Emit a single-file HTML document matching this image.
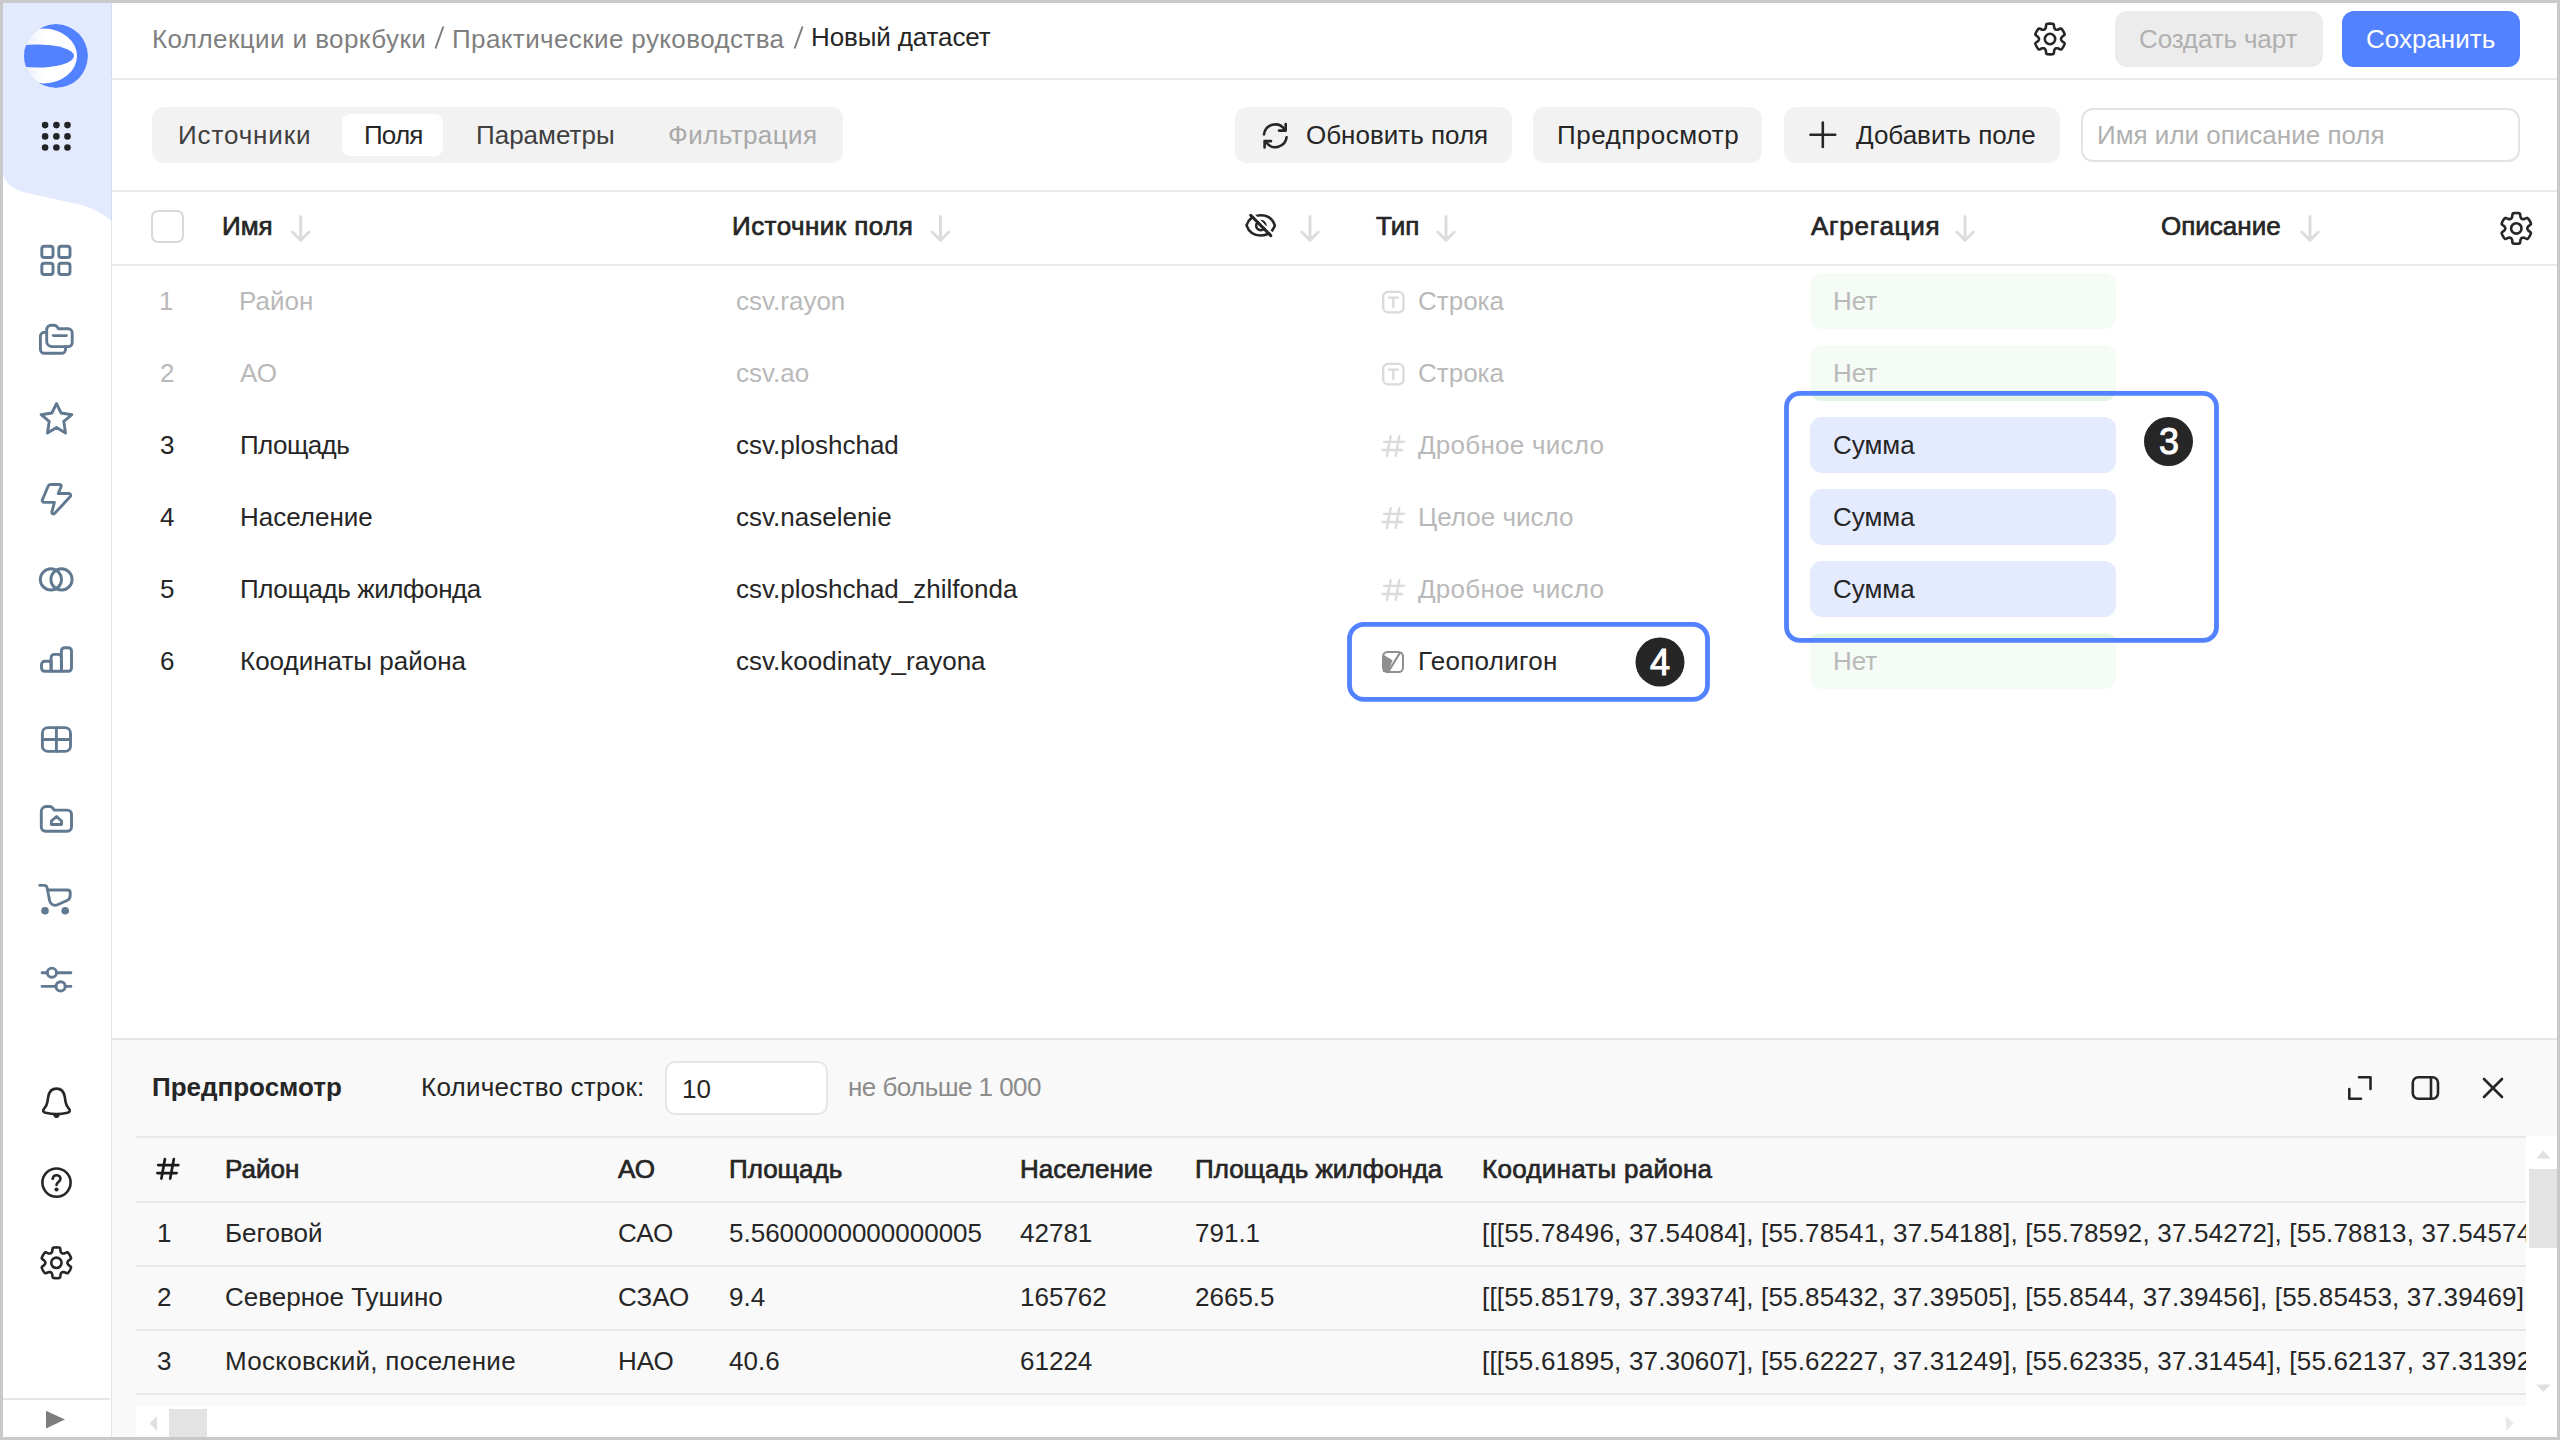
<!DOCTYPE html>
<html><head><meta charset="utf-8">
<style>
*{box-sizing:border-box;margin:0;padding:0}
html,body{width:2560px;height:1440px;overflow:hidden;background:#fff;font-family:"Liberation Sans",sans-serif;color:#262626}
.a{position:absolute}
.t{position:absolute;white-space:pre;font-size:26px;line-height:26px}
.b{font-weight:700}
.hd{font-weight:400 !important;-webkit-text-stroke:0.7px #262626}
.g{color:#b9b9b9}
.m{color:#7f7f7f}
.hl{position:absolute;height:2px;background:#e9e9e9}
svg{position:absolute;overflow:visible}
.frame{position:absolute;left:0;top:0;width:2560px;height:1440px;border:3px solid #c9c9c9;pointer-events:none;z-index:100}
.si{stroke:#617990;stroke-width:2.9;fill:none;stroke-linecap:round;stroke-linejoin:round}
.sk{stroke:#262626;stroke-width:2.6;fill:none;stroke-linecap:round;stroke-linejoin:round}
.btn{position:absolute;background:#f2f2f2;border-radius:12px}
.pill{position:absolute;left:1810px;width:306px;height:56px;border-radius:12px}
.arr{stroke:#dddddd;stroke-width:3;fill:none;stroke-linecap:round;stroke-linejoin:round}
</style></head><body>

<!-- ============ SIDEBAR ============ -->
<div class="a" style="left:111px;top:0;width:1px;height:1440px;background:#e3e3e3"></div>
<svg width="111" height="230" style="left:0;top:0">
  <path d="M0 0 H111 V220 C101 213 94 209 82 205 L27 193 C13 190 5 183 3 174 L3 0 Z" fill="#e4eafd"/>
  <rect x="111" y="0" width="1" height="221" fill="#d3dbf2"/>
</svg>
<!-- logo -->
<svg width="64" height="64" style="left:24px;top:24px" viewBox="0 0 64 64">
  <defs>
    <clipPath id="lc"><circle cx="32" cy="32" r="32"/></clipPath>
    <linearGradient id="lg" x1="0" x2="1" y1="0" y2="0">
      <stop offset="0" stop-color="#dde5fd"/><stop offset="0.5" stop-color="#ffffff"/><stop offset="1" stop-color="#ffffff"/>
    </linearGradient>
  </defs>
  <g clip-path="url(#lc)">
    <circle cx="32" cy="32" r="32" fill="#5282ff"/>
    <ellipse cx="20" cy="32" rx="33" ry="27.4" fill="url(#lg)"/>
    <ellipse cx="13" cy="32" rx="37" ry="11.6" fill="#5282ff"/>
  </g>
</svg>
<!-- apps dots -->
<svg width="111" height="40" style="left:0;top:110px" viewBox="0 110 111 40">
  <g fill="#222326">
    <circle cx="45.1" cy="125.1" r="3.3"/><circle cx="56.4" cy="125.1" r="3.3"/><circle cx="67.5" cy="125.1" r="3.3"/>
    <circle cx="45.1" cy="136.4" r="3.3"/><circle cx="56.4" cy="136.4" r="3.3"/><circle cx="67.5" cy="136.4" r="3.3"/>
    <circle cx="45.1" cy="147.5" r="3.3"/><circle cx="56.4" cy="147.5" r="3.3"/><circle cx="67.5" cy="147.5" r="3.3"/>
  </g>
</svg>
<!-- nav icons -->
<svg width="111" height="1440" style="left:0;top:0">
  <g class="si">
    <!-- grid 4 -->
    <rect x="41.8" y="246.3" width="11.2" height="11.2" rx="2.6"/>
    <rect x="58.8" y="246.3" width="11.2" height="11.2" rx="2.6"/>
    <rect x="41.8" y="263.3" width="11.2" height="11.2" rx="2.6"/>
    <rect x="58.8" y="263.3" width="11.2" height="11.2" rx="2.6"/>
    <!-- collections -->
    <path d="M46.7 332.3 H44.4 C42.2 332.3 40.4 334.1 40.4 336.3 V349.3 C40.4 351.5 42.2 353.3 44.4 353.3 H61.5 C63.7 353.3 65.6 351.5 65.6 349.3 V346.6"/>
    <path d="M46.7 330 C46.7 327.3 48.7 325.2 51.3 325.2 H53.8 C55.3 325.2 56.5 325.9 57.4 327.1 L58.6 328.8 H68.2 C70.4 328.8 72.2 330.6 72.2 332.8 V342.6 C72.2 344.8 70.4 346.6 68.2 346.6 H52 C49.1 346.6 46.7 344.2 46.7 341.3 Z"/>
    <path d="M53.3 335.6 H66.4"/>
    <!-- star -->
    <path d="M56.5 403.6 L61.1 413 L71.9 414.7 L63.8 421.4 L65.5 433 L56.5 427.5 L47.5 433 L49.2 421.4 L41.1 414.7 L51.9 413 Z"/>
    <!-- lightning -->
    <path d="M50.6 484.5 H59.5 C60.7 484.5 61.5 485.6 61.1 486.7 L58.2 493.5 H68.8 C70.5 493.5 71.3 495.5 70.1 496.7 L54.8 513.3 C53.6 514.6 51.5 513.5 51.9 511.8 L54.4 502.4 H44.2 C42.8 502.4 41.9 501.1 42.4 499.8 L48.1 486.2 C48.5 485.2 49.5 484.5 50.6 484.5 Z"/>
    <!-- circles -->
    <circle cx="50.9" cy="579.4" r="10.6"/>
    <circle cx="61.5" cy="579.4" r="10.6"/>
    <!-- bars -->
    <path d="M41.5 664.5 C41.5 662.7 42.9 661.3 44.7 661.3 H51.1 V671.3 H44.7 C42.9 671.3 41.5 669.9 41.5 668.1 Z"/>
    <path d="M51.1 671.3 V657.6 C51.1 655.8 52.5 654.4 54.3 654.4 H58.2 C60 654.4 61.4 655.8 61.4 657.6 V671.3 Z"/>
    <path d="M61.4 671.3 V650.9 C61.4 649.1 62.8 647.7 64.6 647.7 H68.3 C70.1 647.7 71.5 649.1 71.5 650.9 V668.1 C71.5 669.9 70.1 671.3 68.3 671.3 Z"/>
    <!-- table grid -->
    <rect x="42.4" y="727.6" width="28.1" height="23.8" rx="5.5"/>
    <path d="M56.4 727.6 V751.4 M42.4 739.5 H70.5"/>
    <!-- folder home -->
    <path d="M41.3 811.5 C41.3 808.7 43.5 806.5 46.3 806.5 H49.5 C50.8 806.5 52 807.1 52.8 808.1 L54.2 810.1 H67.3 C69.6 810.1 71.5 812 71.5 814.3 V827.1 C71.5 829.4 69.6 831.3 67.3 831.3 H45.5 C43.2 831.3 41.3 829.4 41.3 827.1 Z"/>
    <path d="M51.4 824.5 V821 L56.5 816.5 L61.5 821 V824.5 Z"/>
    <!-- cart -->
    <path d="M39.8 885.4 H44.3 C45.6 885.4 46.7 886.3 47 887.5 L47.5 890 H67.5 C69 890 70.2 891.2 70.2 892.7 V895.5 C70.2 897.7 69 899.6 67 900.5 L57.5 904.8 C54.3 906.3 50.6 904.5 49.7 901 L47.5 890"/>
  </g>
  <g fill="#617990">
    <circle cx="45" cy="910.8" r="3.8"/><circle cx="65.2" cy="910.8" r="3.8"/>
  </g>
  <g class="si">
    <!-- sliders -->
    <path d="M42.1 972.7 H47.3 M56.5 972.7 H70.9 M42.1 986.4 H56 M65.2 986.4 H70.9"/>
    <circle cx="51.9" cy="972.7" r="4.6"/>
    <circle cx="60.6" cy="986.4" r="4.6"/>
  </g>
  <g class="sk" stroke-width="2.9">
    <!-- bell -->
    <path d="M56.5 1088.6 C51.7 1088.6 49 1092 48.2 1097 L47.4 1102 C46.9 1105.3 45.5 1107.2 44 1108.8 C42.5 1110.5 43.2 1112.3 45.5 1112.8 C49.2 1113.6 52.8 1114 56.5 1114 C60.2 1114 63.8 1113.6 67.5 1112.8 C69.8 1112.3 70.5 1110.5 69 1108.8 C67.5 1107.2 66.1 1105.3 65.6 1102 L64.8 1097 C64 1092 61.3 1088.6 56.5 1088.6 Z"/>
    <!-- help -->
    <circle cx="56.5" cy="1182.6" r="14.1"/>
    <path d="M52.7 1178.8 C52.9 1176.6 54.5 1175.3 56.6 1175.3 C58.8 1175.3 60.5 1176.8 60.5 1178.8 C60.5 1181.8 56.5 1182.3 56.5 1185"/>
  </g>
  <g fill="#262626">
    <path d="M52.6 1113.4 H60.4 L59.3 1116.2 C58.8 1117.4 57.7 1118 56.5 1118 C55.3 1118 54.2 1117.4 53.7 1116.2 Z"/>
    <circle cx="56.5" cy="1189.5" r="2.1"/>
  </g>
  <!-- sidebar gear -->
  <g transform="translate(56.4 1262.8)" class="sk" stroke-width="2.9">
    <path id="gearp" d="M11.00 0.00 L11.04 0.39 L11.17 0.78 L11.39 1.20 L11.68 1.64 L11.97 2.11 L12.79 2.72 L13.80 3.44 L14.55 4.17 L14.65 4.76 L14.47 5.27 L14.28 5.77 L14.07 6.26 L13.84 6.75 L13.60 7.23 L13.34 7.70 L13.06 8.16 L12.77 8.61 L12.46 9.05 L12.14 9.48 L11.80 9.90 L11.44 10.30 L10.89 10.52 L9.88 10.23 L8.75 9.72 L7.82 9.31 L7.26 9.30 L6.73 9.26 L6.26 9.28 L5.86 9.37 L5.50 9.53 L5.19 9.76 L4.91 10.07 L4.66 10.46 L4.42 10.94 L4.16 11.43 L4.04 12.44 L3.92 13.67 L3.66 14.69 L3.20 15.06 L2.67 15.17 L2.14 15.25 L1.61 15.32 L1.07 15.36 L0.54 15.39 L0.00 15.40 L-0.54 15.39 L-1.07 15.36 L-1.61 15.32 L-2.14 15.25 L-2.67 15.17 L-3.20 15.06 L-3.66 14.69 L-3.92 13.67 L-4.04 12.44 L-4.16 11.43 L-4.42 10.94 L-4.66 10.46 L-4.91 10.07 L-5.19 9.76 L-5.50 9.53 L-5.86 9.37 L-6.26 9.28 L-6.73 9.26 L-7.26 9.30 L-7.82 9.31 L-8.75 9.72 L-9.88 10.23 L-10.89 10.52 L-11.44 10.30 L-11.80 9.90 L-12.14 9.48 L-12.46 9.05 L-12.77 8.61 L-13.06 8.16 L-13.34 7.70 L-13.60 7.23 L-13.84 6.75 L-14.07 6.26 L-14.28 5.77 L-14.47 5.27 L-14.65 4.76 L-14.55 4.17 L-13.80 3.44 L-12.79 2.72 L-11.97 2.11 L-11.68 1.64 L-11.39 1.20 L-11.17 0.78 L-11.04 0.39 L-11.00 0.00 L-11.04 -0.39 L-11.17 -0.78 L-11.39 -1.20 L-11.68 -1.64 L-11.97 -2.11 L-12.79 -2.72 L-13.80 -3.44 L-14.55 -4.17 L-14.65 -4.76 L-14.47 -5.27 L-14.28 -5.77 L-14.07 -6.26 L-13.84 -6.75 L-13.60 -7.23 L-13.34 -7.70 L-13.06 -8.16 L-12.77 -8.61 L-12.46 -9.05 L-12.14 -9.48 L-11.80 -9.90 L-11.44 -10.30 L-10.89 -10.52 L-9.88 -10.23 L-8.75 -9.72 L-7.82 -9.31 L-7.26 -9.30 L-6.73 -9.26 L-6.26 -9.28 L-5.86 -9.37 L-5.50 -9.53 L-5.19 -9.76 L-4.91 -10.07 L-4.66 -10.46 L-4.42 -10.94 L-4.16 -11.43 L-4.04 -12.44 L-3.92 -13.67 L-3.66 -14.69 L-3.20 -15.06 L-2.67 -15.17 L-2.14 -15.25 L-1.61 -15.32 L-1.07 -15.36 L-0.54 -15.39 L-0.00 -15.40 L0.54 -15.39 L1.07 -15.36 L1.61 -15.32 L2.14 -15.25 L2.67 -15.17 L3.20 -15.06 L3.66 -14.69 L3.92 -13.67 L4.04 -12.44 L4.16 -11.43 L4.42 -10.94 L4.66 -10.46 L4.91 -10.07 L5.19 -9.76 L5.50 -9.53 L5.86 -9.37 L6.26 -9.28 L6.73 -9.26 L7.26 -9.30 L7.82 -9.31 L8.75 -9.72 L9.88 -10.23 L10.89 -10.52 L11.44 -10.30 L11.80 -9.90 L12.14 -9.48 L12.46 -9.05 L12.77 -8.61 L13.06 -8.16 L13.34 -7.70 L13.60 -7.23 L13.84 -6.75 L14.07 -6.26 L14.28 -5.77 L14.47 -5.27 L14.65 -4.76 L14.55 -4.17 L13.80 -3.44 L12.79 -2.72 L11.97 -2.11 L11.68 -1.64 L11.39 -1.20 L11.17 -0.78 L11.04 -0.39 Z"/>
    <circle r="5.2"/>
  </g>
  <rect x="3" y="1398" width="107" height="2" fill="#e6e6e6"/>
  <path d="M46 1410.8 L65 1419.6 L46 1428.4 Z" fill="#7d7d7d"/>
</svg>

<!-- ============ HEADER ============ -->
<div class="hl" style="left:111px;top:78px;width:2449px"></div>
<div class="t m" style="left:152px;top:26px;letter-spacing:0.42px">Коллекции и воркбуки</div>
<svg width="1000" height="60" style="left:0;top:0"><path d="M443.4 26.5 L435.4 48.5 M802.6 26.5 L794.6 48.5" stroke="#7f7f7f" stroke-width="2" fill="none"/></svg>
<div class="t m" style="left:452px;top:26px;letter-spacing:0.39px">Практические руководства</div>
<div class="t" style="left:811px;top:24px;letter-spacing:-0.12px">Новый датасет</div>

<svg width="40" height="40" style="left:2030px;top:19px">
  <g transform="translate(20 20)" class="sk" stroke-width="3"><use href="#gearp"/><circle r="5.2"/></g>
</svg>
<div class="btn" style="left:2115px;top:11px;width:208px;height:56px;background:#ececec"></div>
<div class="t" style="left:2139px;top:26px;color:#b0b0b0;letter-spacing:-0.14px">Создать чарт</div>
<div class="btn" style="left:2342px;top:11px;width:178px;height:56px;background:#5282ff"></div>
<div class="t" style="left:2366px;top:26px;color:#fff">Сохранить</div>


<!-- ============ TOOLBAR ============ -->
<div class="btn" style="left:152px;top:107px;width:691px;height:56px;background:#f2f2f2"></div>
<div class="a" style="left:342px;top:114px;width:101px;height:42px;background:#fff;border-radius:8px"></div>
<div class="t" style="left:178px;top:122px;color:#404040;letter-spacing:0.87px">Источники</div>
<div class="t" style="left:364px;top:122px;letter-spacing:-0.85px">Поля</div>
<div class="t" style="left:476px;top:122px;color:#404040">Параметры</div>
<div class="t" style="left:668px;top:122px;color:#a9a9a9;letter-spacing:0.42px">Фильтрация</div>

<div class="btn" style="left:1235px;top:107px;width:277px;height:56px"></div>
<svg width="2560" height="200" style="left:0;top:0">
  <g class="sk" stroke-width="2.9">
    <path d="M1264 134.4 A11.3 11.3 0 0 1 1284.3 129"/>
    <path d="M1285.7 124 V130.6 H1279"/>
    <path d="M1286.6 137.2 A11.3 11.3 0 0 1 1266.3 142.6"/>
    <path d="M1264.6 147.5 V141.1 H1271"/>
  </g>
</svg>
<div class="t" style="left:1306px;top:122px">Обновить поля</div>
<div class="btn" style="left:1533px;top:107px;width:229px;height:56px"></div>
<div class="t" style="left:1557px;top:122px;letter-spacing:0.49px">Предпросмотр</div>
<div class="btn" style="left:1784px;top:107px;width:276px;height:56px"></div>

<svg width="2560" height="200" style="left:0;top:0"><path class="sk" stroke-width="3.2" d="M1822.8 122.6 V147 M1810.5 134.7 H1835.2"/></svg>
<div class="t" style="left:1856px;top:122px">Добавить поле</div>
<div class="a" style="left:2081px;top:108px;width:439px;height:54px;border:2px solid #e3e3e3;border-radius:12px"></div>
<div class="t" style="left:2097px;top:122px;color:#b0b0b0">Имя или описание поля</div>

<div class="hl" style="left:112px;top:190px;width:2448px"></div>

<!-- ============ TABLE HEADER ============ -->
<div class="a" style="left:151px;top:210px;width:33px;height:33px;border:2px solid #d9d9d9;border-radius:7px"></div>
<div class="t b hd" style="left:222px;top:213px">Имя</div>
<div class="t b hd" style="left:732px;top:213px;letter-spacing:0.45px">Источник поля</div>
<div class="t b hd" style="left:1376px;top:213px">Тип</div>
<div class="t b hd" style="left:1811px;top:213px;letter-spacing:0.75px">Агрегация</div>
<div class="t b hd" style="left:2161px;top:213px">Описание</div>
<svg width="2560" height="300" style="left:0;top:0">
  <g class="arr">
    <path d="M300.7 216.5 V240 M292.4 232 L300.7 240.3 L309.0 232"/>
    <path d="M940.5 216.5 V240 M932.2 232 L940.5 240.3 L948.8 232"/>
    <path d="M1310 216.5 V240 M1301.7 232 L1310 240.3 L1318.3 232"/>
    <path d="M1446 216.5 V240 M1437.7 232 L1446 240.3 L1454.3 232"/>
    <path d="M1965 216.5 V240 M1956.7 232 L1965 240.3 L1973.3 232"/>
    <path d="M2310 216.5 V240 M2301.7 232 L2310 240.3 L2318.3 232"/>
  </g>
  <!-- eye crossed -->
  <g class="sk" stroke-width="2.8">
    <path d="M1246.5 225.4 C1248.8 218.8 1254.2 215.3 1260.7 215.3 C1267.2 215.3 1272.6 218.8 1274.9 225.4 C1272.6 232 1267.2 235.5 1260.7 235.5 C1254.2 235.5 1248.8 232 1246.5 225.4 Z"/>
    <circle cx="1260.8" cy="225.6" r="4.6"/>
  </g>
  <path d="M1250.2 211.2 L1276.2 237.5" stroke="#fff" stroke-width="2.2" fill="none"/>
  <path d="M1250.7 215.3 L1270.8 235.6" stroke="#262626" stroke-width="3" stroke-linecap="round" fill="none"/>
  <g transform="translate(2516.3 228.4)" class="sk" stroke-width="3"><use href="#gearp"/><circle r="5.2"/></g>
</svg>
<div class="hl" style="left:112px;top:264px;width:2448px"></div>

<!-- ============ ROWS ============ -->
<div class="pill" style="top:273px;background:#f5fbf5"></div>
<div class="pill" style="top:345px;background:#f5fbf5"></div>
<div class="pill" style="top:633px;background:#f5fbf5"></div>
<div class="a" style="left:1810px;top:390px;width:306px;height:11px;background:#e3f6e1;border-radius:0 0 12px 12px"></div>
<div class="a" style="left:1810px;top:634px;width:306px;height:8px;background:#e3f6e1;border-radius:12px 12px 0 0"></div>
<div class="pill" style="top:417px;background:#e5ebfe"></div>
<div class="pill" style="top:489px;background:#e5ebfe"></div>
<div class="pill" style="top:561px;background:#e5ebfe"></div>

<div class="t g" style="left:159px;top:288px">1</div>
<div class="t g" style="left:239px;top:288px">Район</div>
<div class="t g" style="left:736px;top:288px">csv.rayon</div>
<div class="t g" style="left:1418px;top:288px">Строка</div>
<div class="t g" style="left:1833px;top:288px">Нет</div>

<div class="t g" style="left:160px;top:360px">2</div>
<div class="t g" style="left:240px;top:360px">АО</div>
<div class="t g" style="left:736px;top:360px">csv.ao</div>
<div class="t g" style="left:1418px;top:360px">Строка</div>
<div class="t g" style="left:1833px;top:360px">Нет</div>

<div class="t" style="left:160px;top:432px">3</div>
<div class="t" style="left:240px;top:432px;letter-spacing:-0.57px">Площадь</div>
<div class="t" style="left:736px;top:432px">csv.ploshchad</div>
<div class="t g" style="left:1418px;top:432px;letter-spacing:0.25px">Дробное число</div>
<div class="t" style="left:1833px;top:432px">Сумма</div>

<div class="t" style="left:160px;top:504px">4</div>
<div class="t" style="left:240px;top:504px">Население</div>
<div class="t" style="left:736px;top:504px">csv.naselenie</div>
<div class="t g" style="left:1418px;top:504px">Целое число</div>
<div class="t" style="left:1833px;top:504px">Сумма</div>

<div class="t" style="left:160px;top:576px">5</div>
<div class="t" style="left:240px;top:576px;letter-spacing:-0.4px">Площадь жилфонда</div>
<div class="t" style="left:736px;top:576px">csv.ploshchad_zhilfonda</div>
<div class="t g" style="left:1418px;top:576px;letter-spacing:0.25px">Дробное число</div>
<div class="t" style="left:1833px;top:576px">Сумма</div>

<div class="t" style="left:160px;top:648px">6</div>
<div class="t" style="left:240px;top:648px">Коодинаты района</div>
<div class="t" style="left:736px;top:648px">csv.koodinaty_rayona</div>
<div class="t" style="left:1418px;top:648px;letter-spacing:0.3px">Геополигон</div>
<div class="t g" style="left:1833px;top:648px">Нет</div>

<svg width="2560" height="720" style="left:0;top:0">
  <!-- T icons -->
  <g stroke="#dadada" stroke-width="2.3" fill="none" stroke-linecap="round">
    <rect x="1383.2" y="291.9" width="20.3" height="20.4" rx="5"/>
    <path d="M1389 297.7 H1397.6 M1393.3 297.7 V307"/>
    <rect x="1383.2" y="363.9" width="20.3" height="20.4" rx="5"/>
    <path d="M1389 369.7 H1397.6 M1393.3 369.7 V379"/>
  </g>
  <g stroke="#dadada" stroke-width="2.3" fill="none" stroke-linecap="round">
    <path d="M1390.7 436.1 L1386.9 455.8 M1399.3 436.1 L1395.7 455.8 M1384.1 441.9 H1403.9 M1382.3 450 H1402.1"/>
    <path d="M1390.7 508.1 L1386.9 527.8 M1399.3 508.1 L1395.7 527.8 M1384.1 513.9 H1403.9 M1382.3 522 H1402.1"/>
    <path d="M1390.7 580.1 L1386.9 599.8 M1399.3 580.1 L1395.7 599.8 M1384.1 585.9 H1403.9 M1382.3 594 H1402.1"/>
  </g>
  <!-- geo icon -->
  <g transform="translate(1382 651)">
    <rect x="1" y="1" width="20" height="20" rx="4.5" fill="none" stroke="#8f8f8f" stroke-width="2"/>
    <path d="M1 3.5 L10.5 9.3 L6.3 21 H1 Z" fill="#8f8f8f"/>
    <path d="M18.3 1.2 L6 21.3" stroke="#8f8f8f" stroke-width="2.2"/>
  </g>
  <!-- highlight boxes -->
  <rect x="1786.5" y="393.4" width="430" height="247" rx="13.5" fill="none" stroke="#5282ff" stroke-width="4.8"/>
  <rect x="1349.5" y="624.4" width="358" height="75" rx="14.5" fill="none" stroke="#5282ff" stroke-width="4.8"/>
  <circle cx="2168.5" cy="441.5" r="24.5" fill="#262626"/>
  <circle cx="1660" cy="662" r="24.5" fill="#262626"/>
</svg>
<div class="t" style="left:2159px;top:424px;color:#fff;font-size:36px;line-height:36px;-webkit-text-stroke:1px #fff">3</div>
<div class="t" style="left:1650px;top:645px;color:#fff;font-size:36px;line-height:36px;-webkit-text-stroke:1px #fff">4</div>

<!-- ============ PREVIEW ============ -->
<div class="a" style="left:112px;top:1038px;width:2448px;height:402px;background:#f9f9f9;border-top:2px solid #e6e6e6"></div>
<div class="t b" style="left:152px;top:1074px">Предпросмотр</div>
<div class="t" style="left:421px;top:1074px;letter-spacing:0.25px">Количество строк:</div>
<div class="a" style="left:665px;top:1061px;width:163px;height:54px;background:#fff;border:2px solid #e6e6e6;border-radius:10px"></div>
<div class="t" style="left:682px;top:1076px">10</div>
<div class="t" style="left:848px;top:1074px;color:#8c8c8c;letter-spacing:-0.55px">не больше 1 000</div>
<svg width="2560" height="1440" style="left:0;top:0">
  <g class="sk" stroke-width="2.6" stroke-linecap="butt" stroke-linejoin="miter">
    <path d="M2349.3 1089 V1098.7 H2361"/>
    <path d="M2359 1077.3 H2370.5 V1089"/>
    <rect x="2412.8" y="1077.3" width="25.2" height="21.4" rx="5.5"/>
    <path d="M2431 1077.3 V1098.7"/>
    <path d="M2484 1079 L2502 1097 M2502 1079 L2484 1097"/>
  </g>
</svg>
<div class="a" style="left:136px;top:1136px;width:2390px;height:270px">
  <div class="hl" style="left:0;top:0;width:2390px"></div>
  <div class="hl" style="left:0;top:65px;width:2390px"></div>
  <div class="hl" style="left:0;top:129px;width:2390px"></div>
  <div class="hl" style="left:0;top:193px;width:2390px"></div>
  <div class="hl" style="left:0;top:257px;width:2390px"></div>
</div>
<svg width="40" height="40" style="left:0;top:0"><path d="M164.9 1159.2 L161.4 1178.6 M173.8 1159.2 L170.2 1178.6 M158.2 1165.1 H178.4 M157.4 1173.1 H176.6" stroke="#1c1c1c" stroke-width="2.7" stroke-linecap="round" fill="none"/></svg>
<div class="t b hd" style="left:225px;top:1156px">Район</div>
<div class="t b hd" style="left:618px;top:1156px">АО</div>
<div class="t b hd" style="left:729px;top:1156px">Площадь</div>
<div class="t b hd" style="left:1020px;top:1156px">Население</div>
<div class="t b hd" style="left:1195px;top:1156px">Площадь жилфонда</div>
<div class="t b hd" style="left:1482px;top:1156px;letter-spacing:0.27px">Коодинаты района</div>

<div class="t" style="left:157px;top:1220px">1</div>
<div class="t" style="left:225px;top:1220px">Беговой</div>
<div class="t" style="left:618px;top:1220px">САО</div>
<div class="t" style="left:729px;top:1220px">5.5600000000000005</div>
<div class="t" style="left:1020px;top:1220px">42781</div>
<div class="t" style="left:1195px;top:1220px">791.1</div>
<div class="t" style="left:157px;top:1284px">2</div>
<div class="t" style="left:225px;top:1284px">Северное Тушино</div>
<div class="t" style="left:618px;top:1284px">СЗАО</div>
<div class="t" style="left:729px;top:1284px">9.4</div>
<div class="t" style="left:1020px;top:1284px">165762</div>
<div class="t" style="left:1195px;top:1284px">2665.5</div>
<div class="t" style="left:157px;top:1348px">3</div>
<div class="t" style="left:225px;top:1348px;letter-spacing:0.28px">Московский, поселение</div>
<div class="t" style="left:618px;top:1348px">НАО</div>
<div class="t" style="left:729px;top:1348px">40.6</div>
<div class="t" style="left:1020px;top:1348px">61224</div>
<div class="a" style="left:1482px;top:1210px;width:1044px;height:190px;overflow:hidden;letter-spacing:0.18px">
  <div class="t" style="left:0;top:10px">[[[55.78496, 37.54084], [55.78541, 37.54188], [55.78592, 37.54272], [55.78813, 37.54574], [55.7889, 37.5468]</div>
  <div class="t" style="left:0;top:74px">[[[55.85179, 37.39374], [55.85432, 37.39505], [55.8544, 37.39456], [55.85453, 37.39469]</div>
  <div class="t" style="left:0;top:138px">[[[55.61895, 37.30607], [55.62227, 37.31249], [55.62335, 37.31454], [55.62137, 37.31392], [55.6211, 37.3135]</div>
</div>
<!-- scrollbars -->
<div class="a" style="left:136px;top:1406px;width:2421px;height:31px;background:#fff"></div>
<div class="a" style="left:2526px;top:1136px;width:31px;height:301px;background:#fff"></div>
<div class="a" style="left:169px;top:1409px;width:38px;height:28px;background:#e3e3e3"></div>
<div class="a" style="left:2529px;top:1169px;width:28px;height:79px;background:#e3e3e3"></div>
<svg width="2560" height="1440" style="left:0;top:0">
  <path d="M2536 1158.4 L2543.3 1150.8 L2550.6 1158.4 Z" fill="#e0e0e0"/>
  <path d="M2536 1384.5 L2543.3 1392 L2550.6 1384.5 Z" fill="#e0e0e0"/>
  <path d="M157 1416 L149.5 1423.5 L157 1431 Z" fill="#e0e0e0"/>
  <path d="M2506 1416 L2513.5 1423.5 L2506 1431 Z" fill="#e8e8e8"/>
</svg>

<div class="frame"></div>
</body></html>
